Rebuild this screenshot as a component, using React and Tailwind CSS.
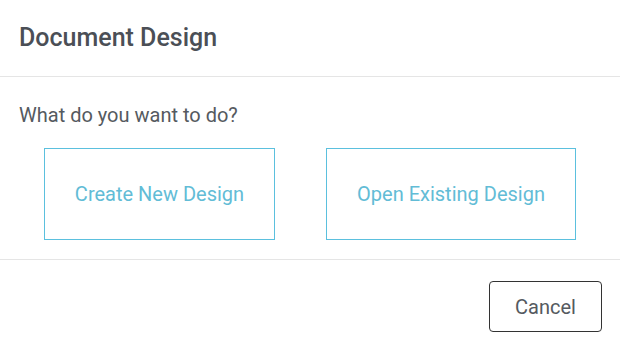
export default function App() {
  return (
    <div className="w-[620px] h-[351px] bg-white font-['Roboto',sans-serif] overflow-hidden">
      <div className="h-[77px] flex items-center px-[19px] border-b border-[#e5e5e5]">
        <h1 className="text-[25px] font-medium text-[#4b4f56]">Document Design</h1>
      </div>
      <div className="h-[183px] border-b border-[#e5e5e5] px-[19px] pt-[25px]">
        <p className="text-[20px] text-[#555a60] leading-[26px]">What do you want to do?</p>
        <div className="flex justify-center gap-[51px] mt-[20px]">
          <button className="h-[92px] w-[231px] border border-[#5bc0de] text-[#62bcd6] text-[20px]">
            Create New Design
          </button>
          <button className="h-[92px] w-[250px] border border-[#5bc0de] text-[#62bcd6] text-[20px]">
            Open Existing Design
          </button>
        </div>
      </div>
      <div className="flex justify-end px-[18px] pt-[21px]">
        <button className="h-[51px] w-[113px] rounded-[4px] border border-[#333] text-[20px] text-[#555a60]">
          Cancel
        </button>
      </div>
    </div>
  );
}
